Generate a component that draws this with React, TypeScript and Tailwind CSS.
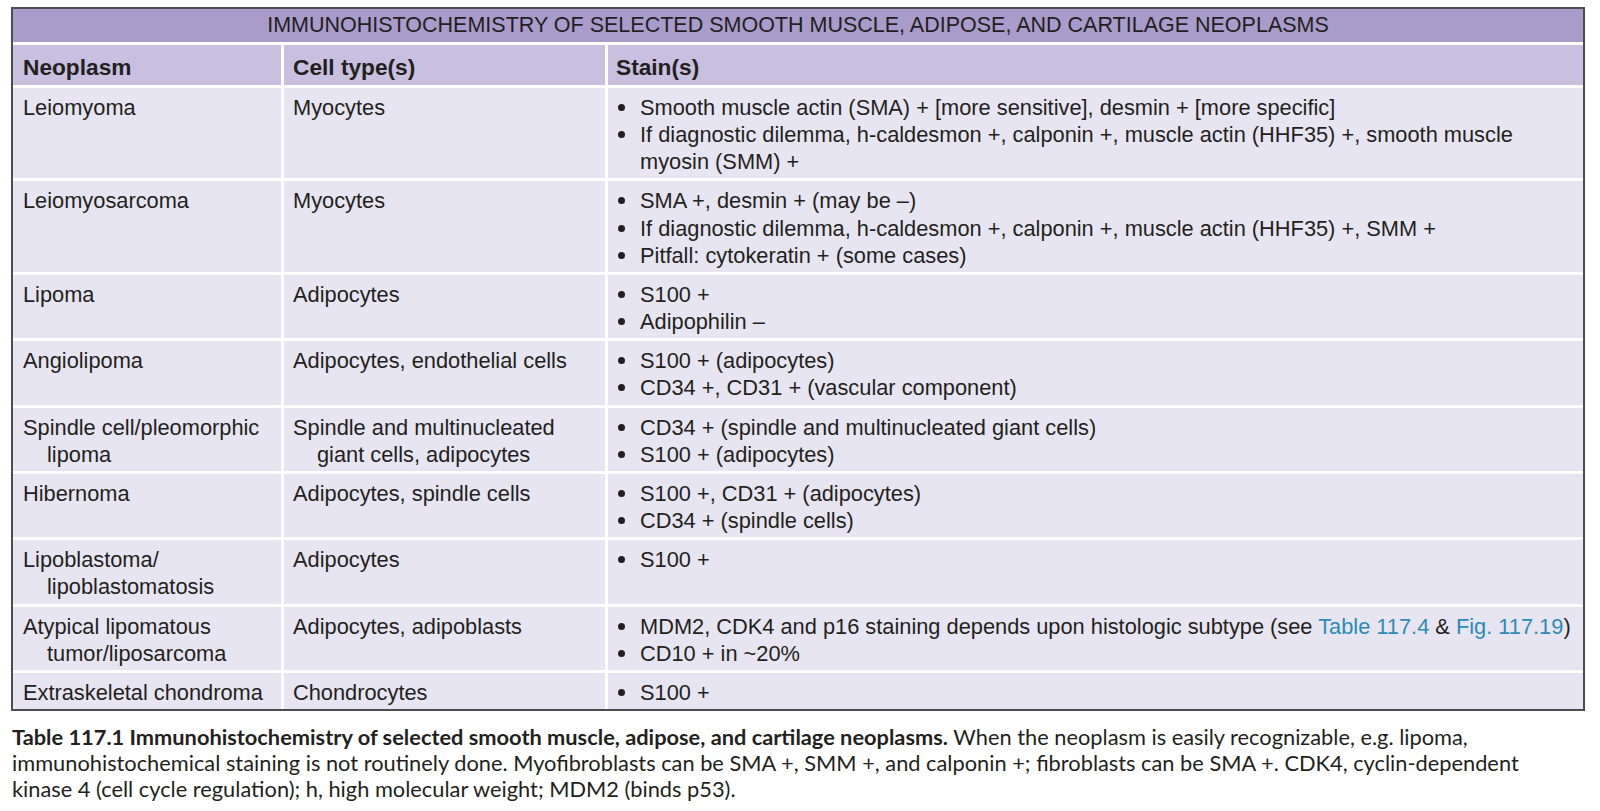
import React from "react";

type Row = {
  neo: string[];
  cell: string[];
  stains: React.ReactNode[][];
};

const link = (t: string) => <span className="text-[#2b8cb6]">{t}</span>;

const rows: Row[] = [
  {
    neo: ["Leiomyoma"],
    cell: ["Myocytes"],
    stains: [
      ["Smooth muscle actin (SMA) + [more sensitive], desmin + [more specific]"],
      [
        "If diagnostic dilemma, h-caldesmon +, calponin +, muscle actin (HHF35) +, smooth muscle",
        "myosin (SMM) +",
      ],
    ],
  },
  {
    neo: ["Leiomyosarcoma"],
    cell: ["Myocytes"],
    stains: [
      ["SMA +, desmin + (may be –)"],
      ["If diagnostic dilemma, h-caldesmon +, calponin +, muscle actin (HHF35) +, SMM +"],
      ["Pitfall: cytokeratin + (some cases)"],
    ],
  },
  {
    neo: ["Lipoma"],
    cell: ["Adipocytes"],
    stains: [["S100 +"], ["Adipophilin –"]],
  },
  {
    neo: ["Angiolipoma"],
    cell: ["Adipocytes, endothelial cells"],
    stains: [["S100 + (adipocytes)"], ["CD34 +, CD31 + (vascular component)"]],
  },
  {
    neo: ["Spindle cell/pleomorphic", "lipoma"],
    cell: ["Spindle and multinucleated", "giant cells, adipocytes"],
    stains: [["CD34 + (spindle and multinucleated giant cells)"], ["S100 + (adipocytes)"]],
  },
  {
    neo: ["Hibernoma"],
    cell: ["Adipocytes, spindle cells"],
    stains: [["S100 +, CD31 + (adipocytes)"], ["CD34 + (spindle cells)"]],
  },
  {
    neo: ["Lipoblastoma/", "lipoblastomatosis"],
    cell: ["Adipocytes"],
    stains: [["S100 +"]],
  },
  {
    neo: ["Atypical lipomatous", "tumor/liposarcoma"],
    cell: ["Adipocytes, adipoblasts"],
    stains: [
      [
        <>
          MDM2, CDK4 and p16 staining depends upon histologic subtype (see {link("Table 117.4")} &amp;{" "}
          {link("Fig. 117.19")})
        </>,
      ],
      ["CD10 + in ~20%"],
    ],
  },
  {
    neo: ["Extraskeletal chondroma"],
    cell: ["Chondrocytes"],
    stains: [["S100 +"]],
  },
];

function Hanging({ lines }: { lines: string[] }) {
  return (
    <>
      {lines.map((l, i) => (
        <div key={i} className={i > 0 ? "pl-6 whitespace-nowrap" : "whitespace-nowrap"}>
          {l}
        </div>
      ))}
    </>
  );
}

export default function App() {
  return (
    <div
      className="min-h-[811px] bg-white pl-[11px] pt-[7px] text-[#231f20]"
      style={{ fontFamily: '"Liberation Sans", Arial, sans-serif' }}
    >
      <div className="w-[1574px] border-2 border-[#4d4d4f] bg-white">
        <div className="grid grid-cols-[268px_321px_1fr] gap-[3px] text-[21.8px] leading-[27.15px]">
          <div className="col-span-3 flex h-[33px] items-center justify-center bg-[#a99cca] pt-px text-[21.5px]">
            IMMUNOHISTOCHEMISTRY OF SELECTED SMOOTH MUSCLE, ADIPOSE, AND CARTILAGE NEOPLASMS
          </div>
          <div className="flex h-[40px] items-center bg-[#c9c0df] pl-[10px] pt-[5px] text-[22.7px] font-bold">
            Neoplasm
          </div>
          <div className="flex h-[40px] items-center bg-[#c9c0df] pl-[9px] pt-[5px] text-[22.7px] font-bold">
            Cell type(s)
          </div>
          <div className="flex h-[40px] items-center bg-[#c9c0df] pl-[8px] pt-[5px] text-[22.7px] font-bold">
            Stain(s)
          </div>
          {rows.map((r, i) => (
            <React.Fragment key={i}>
              <div className="bg-[#e8e5f2] pb-[3px] pl-[10px] pt-[6px]">
                <Hanging lines={r.neo} />
              </div>
              <div className="bg-[#e8e5f2] pb-[3px] pl-[9px] pt-[6px]">
                <Hanging lines={r.cell} />
              </div>
              <div className="bg-[#e8e5f2] pb-[3px] pl-[9px] pt-[6px]">
                {r.stains.map((s, j) => (
                  <div key={j} className="flex">
                    <span className="w-[23px] shrink-0">
                      <span className="ml-px mt-[10px] block h-[7px] w-[7px] rounded-full bg-[#231f20]" />
                    </span>
                    <div>
                      {s.map((l, k) => (
                        <div key={k} className="whitespace-nowrap">
                          {l}
                        </div>
                      ))}
                    </div>
                  </div>
                ))}
              </div>
            </React.Fragment>
          ))}
        </div>
      </div>
      <div
        className="mt-[13px] pl-px text-[21.8px] leading-[26px] text-[#231f20]"
        style={{ fontFamily: 'Lato, "Open Sans", sans-serif' }}
      >
        <div className="whitespace-nowrap">
          <span className="font-bold">
            Table 117.1 Immunohistochemistry of selected smooth muscle, adipose, and cartilage neoplasms.
          </span>{" "}
          When the neoplasm is easily recognizable, e.g. lipoma,
        </div>
        <div className="whitespace-nowrap">
          immunohistochemical staining is not routinely done. Myofibroblasts can be SMA +, SMM +, and calponin +;
          fibroblasts can be SMA +. CDK4, cyclin-dependent
        </div>
        <div className="whitespace-nowrap">
          kinase 4 (cell cycle regulation); h, high molecular weight; MDM2 (binds p53).
        </div>
      </div>
    </div>
  );
}
